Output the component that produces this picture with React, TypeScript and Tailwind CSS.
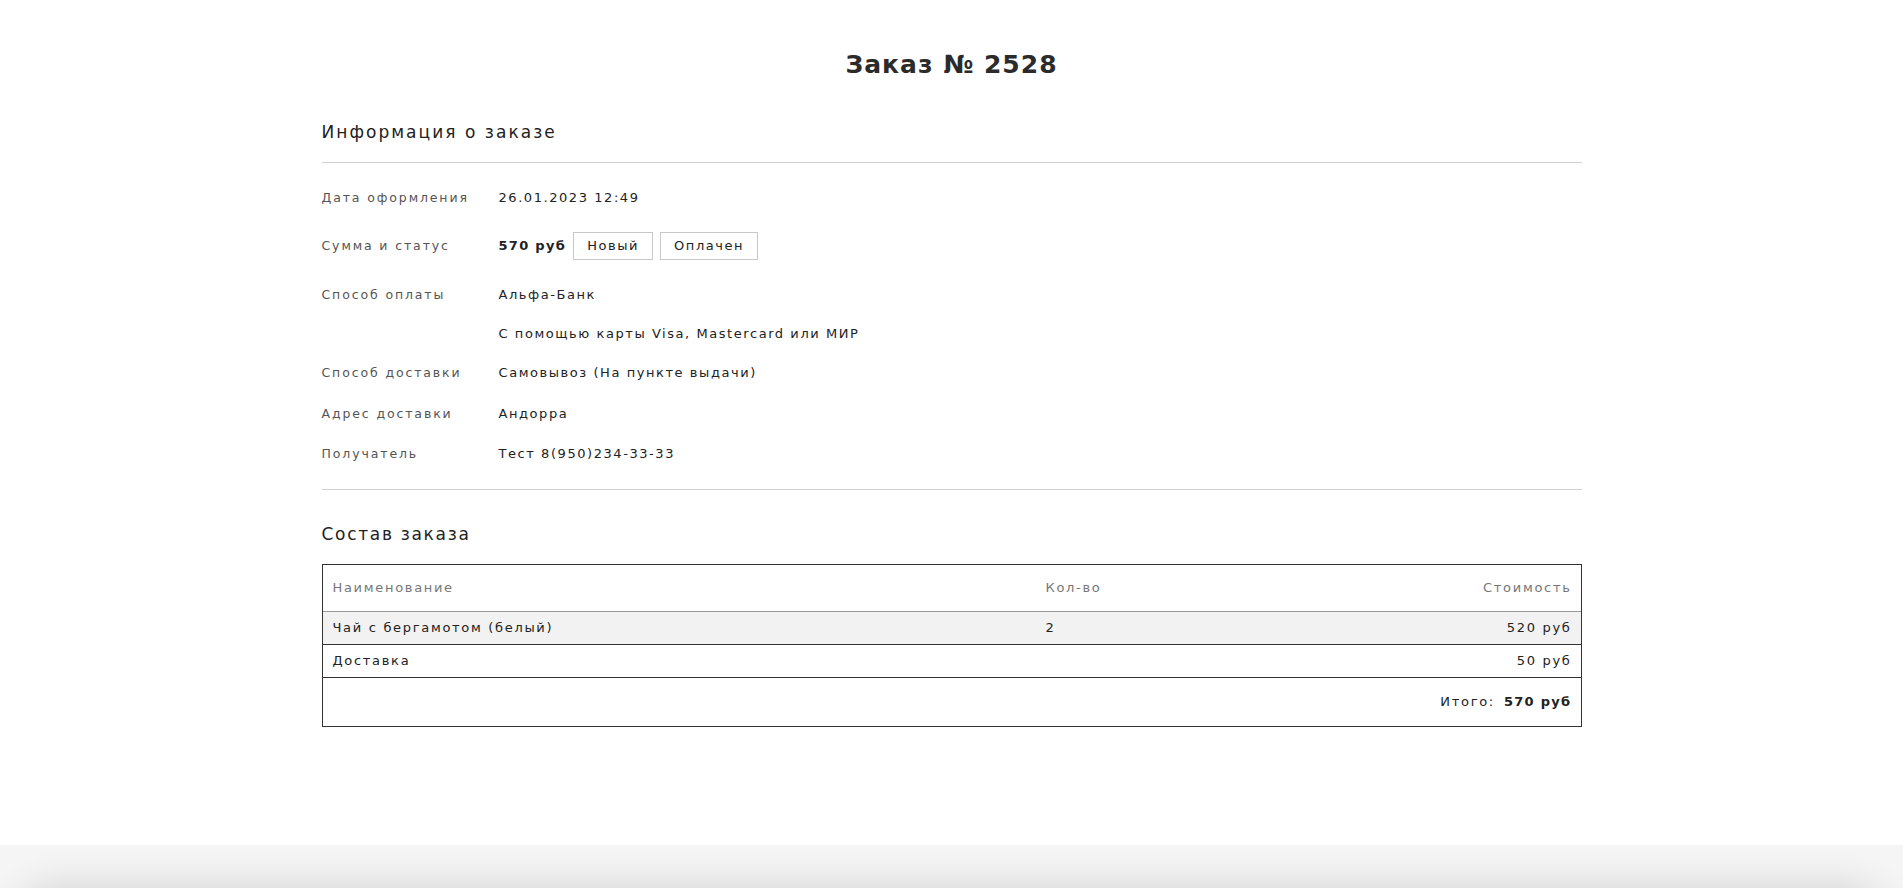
const font = "font-['DejaVu_Sans',_'Liberation_Sans',_sans-serif]";

type Row = { label: string; value: React.ReactNode; gap: string };

function InfoRow({ label, value, gap }: Row) {
  return (
    <div className={`flex items-center ${gap}`}>
      <div className="w-[177px] shrink-0 text-[12.5px] leading-5 tracking-[0.15em] text-[#555]">
        {label}
      </div>
      <div className="flex items-center text-[13px] leading-5 tracking-[0.12em] text-[#222]">
        {value}
      </div>
    </div>
  );
}

export default function App() {
  const rows: Row[] = [
    { label: "Дата оформления", value: "26.01.2023 12:49", gap: "mt-[25px]" },
    {
      label: "Сумма и статус",
      value: (
        <>
          <b className="font-bold tracking-[0.1em]">570 руб</b>
          <span className="ml-[7px] h-[28px] border border-[#c8c8c8] px-[13px] leading-[26px]">
            Новый
          </span>
          <span className="ml-[7px] h-[28px] border border-[#c8c8c8] px-[13px] leading-[26px]">
            Оплачен
          </span>
        </>
      ),
      gap: "mt-[24px]",
    },
    { label: "Способ оплаты", value: "Альфа-Банк", gap: "mt-[25px]" },
    { label: "", value: "С помощью карты Visa, Mastercard или МИР", gap: "mt-[19px]" },
    { label: "Способ доставки", value: "Самовывоз (На пункте выдачи)", gap: "mt-[19px]" },
    { label: "Адрес доставки", value: "Андорра", gap: "mt-[21px]" },
    { label: "Получатель", value: "Тест 8(950)234-33-33", gap: "mt-[20px]" },
  ];

  return (
    <div className={`flex h-[888px] flex-col overflow-hidden bg-white ${font}`}>
      <main className="mx-auto w-[1260px] pt-[48px]">
        <h1 className="text-center text-[25px] font-bold leading-[34px] tracking-[0.04em] text-[#2b2b2b]">
          Заказ № 2528
        </h1>

        <h2 className="mt-[38px] text-[17px] leading-6 tracking-[0.12em] text-[#222]">
          Информация о заказе
        </h2>
        <div className="mt-[18px] h-px bg-[#cfcfcf]" />

        {rows.map((r, i) => (
          <InfoRow key={i} {...r} />
        ))}

        <div className="mt-[25px] h-px bg-[#cfcfcf]" />

        <h2 className="mt-[32px] text-[17px] leading-6 tracking-[0.1em] text-[#222]">
          Состав заказа
        </h2>

        {/* состав заказа */}
        <div className="mt-[18px] border border-[#333] text-[13px] tracking-[0.13em] text-[#222]">
          <div className="flex h-[47px] items-center border-b border-[#999] pl-[10px] pr-[9px] text-[#777]">
            <div className="w-[713px]">Наименование</div>
            <div className="flex-1">Кол-во</div>
            <div>Стоимость</div>
          </div>
          <div className="flex h-[33px] items-center border-b border-[#333] bg-[#f2f2f2] pl-[10px] pr-[9px]">
            <div className="w-[713px]">Чай с бергамотом (белый)</div>
            <div className="flex-1">2</div>
            <div>520 руб</div>
          </div>
          <div className="flex h-[33px] items-center border-b border-[#333] pl-[10px] pr-[9px]">
            <div className="w-[713px]">Доставка</div>
            <div className="flex-1" />
            <div>50 руб</div>
          </div>
          <div className="flex h-[48px] items-center justify-end pr-[9px]">
            Итого:<b className="ml-[9px] font-bold tracking-[0.1em]">570 руб</b>
          </div>
        </div>
      </main>

      <footer className="mt-auto h-[43px] shrink-0 overflow-hidden bg-[#f5f5f5] px-[22px]">
        <div className="mt-[52px] h-[80px] rounded-t-[40px] bg-[#d8d8d8] shadow-[0_0_36px_14px_rgba(0,0,0,0.12)]" />
      </footer>
    </div>
  );
}
